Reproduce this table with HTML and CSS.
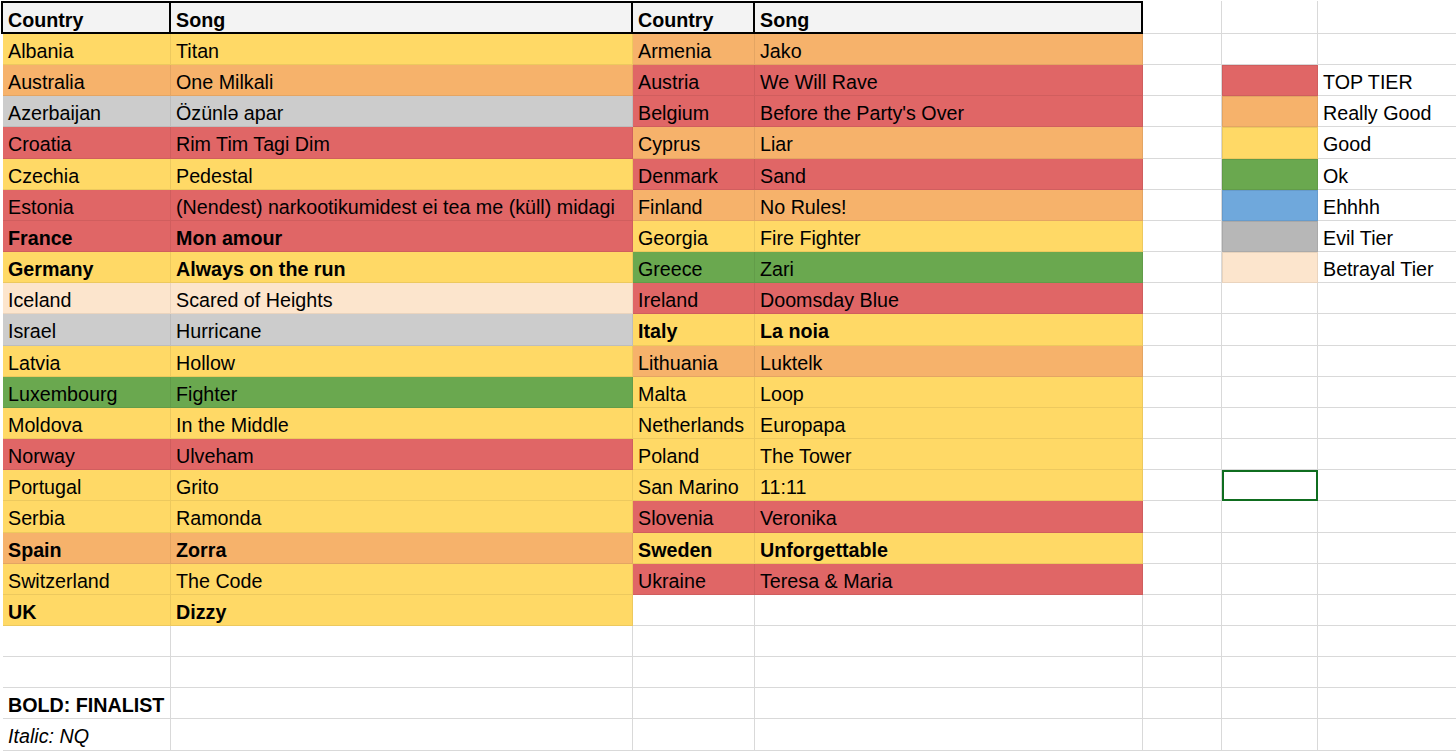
FILE: index.html
```html
<!DOCTYPE html>
<html lang="en">
<head>
<meta charset="utf-8">
<title>Eurovision 2024 tier list</title>
<link rel="stylesheet" href="styles.css">
</head>
<body>
<div class="sheet">
  <div class="row head">
    <div class="cell hc first">Country</div>
    <div class="cell hc">Song</div>
    <div class="cell hc">Country</div>
    <div class="cell hc">Song</div>
    <div class="cell"></div><div class="cell"></div><div class="cell"></div>
  </div>
  <div class="row">
    <div class="cell y">Albania</div><div class="cell y">Titan</div>
    <div class="cell o">Armenia</div><div class="cell o">Jako</div>
    <div class="cell"></div><div class="cell"></div><div class="cell"></div>
  </div>
  <div class="row">
    <div class="cell o">Australia</div><div class="cell o">One Milkali</div>
    <div class="cell r">Austria</div><div class="cell r">We Will Rave</div>
    <div class="cell"></div><div class="cell sw r"></div><div class="cell">TOP TIER</div>
  </div>
  <div class="row">
    <div class="cell gy">Azerbaijan</div><div class="cell gy">Özünlə apar</div>
    <div class="cell r">Belgium</div><div class="cell r">Before the Party's Over</div>
    <div class="cell"></div><div class="cell sw o"></div><div class="cell">Really Good</div>
  </div>
  <div class="row">
    <div class="cell r">Croatia</div><div class="cell r">Rim Tim Tagi Dim</div>
    <div class="cell o">Cyprus</div><div class="cell o">Liar</div>
    <div class="cell"></div><div class="cell sw y"></div><div class="cell">Good</div>
  </div>
  <div class="row">
    <div class="cell y">Czechia</div><div class="cell y">Pedestal</div>
    <div class="cell r">Denmark</div><div class="cell r">Sand</div>
    <div class="cell"></div><div class="cell sw g"></div><div class="cell">Ok</div>
  </div>
  <div class="row">
    <div class="cell r">Estonia</div><div class="cell r">(Nendest) narkootikumidest ei tea me (küll) midagi</div>
    <div class="cell o">Finland</div><div class="cell o">No Rules!</div>
    <div class="cell"></div><div class="cell sw b"></div><div class="cell">Ehhhh</div>
  </div>
  <div class="row">
    <div class="cell r bold">France</div><div class="cell r bold">Mon amour</div>
    <div class="cell y">Georgia</div><div class="cell y">Fire Fighter</div>
    <div class="cell"></div><div class="cell sw ev"></div><div class="cell">Evil Tier</div>
  </div>
  <div class="row">
    <div class="cell y bold">Germany</div><div class="cell y bold">Always on the run</div>
    <div class="cell g">Greece</div><div class="cell g">Zari</div>
    <div class="cell"></div><div class="cell sw bt"></div><div class="cell">Betrayal Tier</div>
  </div>
  <div class="row">
    <div class="cell bt">Iceland</div><div class="cell bt">Scared of Heights</div>
    <div class="cell r">Ireland</div><div class="cell r">Doomsday Blue</div>
    <div class="cell"></div><div class="cell"></div><div class="cell"></div>
  </div>
  <div class="row">
    <div class="cell gy">Israel</div><div class="cell gy">Hurricane</div>
    <div class="cell y bold">Italy</div><div class="cell y bold">La noia</div>
    <div class="cell"></div><div class="cell"></div><div class="cell"></div>
  </div>
  <div class="row">
    <div class="cell y">Latvia</div><div class="cell y">Hollow</div>
    <div class="cell o">Lithuania</div><div class="cell o">Luktelk</div>
    <div class="cell"></div><div class="cell"></div><div class="cell"></div>
  </div>
  <div class="row">
    <div class="cell g">Luxembourg</div><div class="cell g">Fighter</div>
    <div class="cell y">Malta</div><div class="cell y">Loop</div>
    <div class="cell"></div><div class="cell"></div><div class="cell"></div>
  </div>
  <div class="row">
    <div class="cell y">Moldova</div><div class="cell y">In the Middle</div>
    <div class="cell y">Netherlands</div><div class="cell y">Europapa</div>
    <div class="cell"></div><div class="cell"></div><div class="cell"></div>
  </div>
  <div class="row">
    <div class="cell r">Norway</div><div class="cell r">Ulveham</div>
    <div class="cell y">Poland</div><div class="cell y">The Tower</div>
    <div class="cell"></div><div class="cell"></div><div class="cell"></div>
  </div>
  <div class="row">
    <div class="cell y">Portugal</div><div class="cell y">Grito</div>
    <div class="cell y">San Marino</div><div class="cell y">11:11</div>
    <div class="cell"></div><div class="cell sel"></div><div class="cell"></div>
  </div>
  <div class="row">
    <div class="cell y">Serbia</div><div class="cell y">Ramonda</div>
    <div class="cell r">Slovenia</div><div class="cell r">Veronika</div>
    <div class="cell"></div><div class="cell"></div><div class="cell"></div>
  </div>
  <div class="row">
    <div class="cell o bold">Spain</div><div class="cell o bold">Zorra</div>
    <div class="cell y bold">Sweden</div><div class="cell y bold">Unforgettable</div>
    <div class="cell"></div><div class="cell"></div><div class="cell"></div>
  </div>
  <div class="row">
    <div class="cell y">Switzerland</div><div class="cell y">The Code</div>
    <div class="cell r">Ukraine</div><div class="cell r">Teresa &amp; Maria</div>
    <div class="cell"></div><div class="cell"></div><div class="cell"></div>
  </div>
  <div class="row">
    <div class="cell y bold">UK</div><div class="cell y bold">Dizzy</div>
    <div class="cell"></div><div class="cell"></div>
    <div class="cell"></div><div class="cell"></div><div class="cell"></div>
  </div>
  <div class="row">
    <div class="cell"></div><div class="cell"></div><div class="cell"></div><div class="cell"></div>
    <div class="cell"></div><div class="cell"></div><div class="cell"></div>
  </div>
  <div class="row">
    <div class="cell"></div><div class="cell"></div><div class="cell"></div><div class="cell"></div>
    <div class="cell"></div><div class="cell"></div><div class="cell"></div>
  </div>
  <div class="row">
    <div class="cell bold">BOLD: FINALIST</div><div class="cell"></div><div class="cell"></div><div class="cell"></div>
    <div class="cell"></div><div class="cell"></div><div class="cell"></div>
  </div>
  <div class="row">
    <div class="cell italic">Italic: NQ</div><div class="cell"></div><div class="cell"></div><div class="cell"></div>
    <div class="cell"></div><div class="cell"></div><div class="cell"></div>
  </div>
</div>
</body>
</html>
```
FILE: styles.css
```css
* { box-sizing: border-box; }

html, body {
  margin: 0;
  background: #ffffff;
  overflow: hidden;
}

body {
  font-family: "Liberation Sans", Arial, sans-serif;
  font-size: 19.7px;
  color: #000000;
}

.sheet {
  padding: 1px 0 0 1px;
}

.row {
  display: grid;
  grid-template-columns: 168px 462px 122px 388px 79px 96px 150px;
  height: 31.17px;
  padding-left: 2px;
}

.row.head {
  grid-template-columns: 170px 462px 122px 388px 79px 96px 150px;
  height: 33px;
  padding-left: 0;
}

.cell {
  border-right: 1px solid #d9d9d9;
  border-bottom: 1px solid #d9d9d9;
  padding: 7px 5px 0 5px;
  line-height: 20px;
  white-space: nowrap;
  overflow: hidden;
}

.head .cell {
  padding-top: 8px;
}

.head .hc {
  background: #f3f3f3;
  border-top: 2px solid #000000;
  border-bottom: 2px solid #000000;
  border-right: 2px solid #000000;
  font-weight: bold;
  padding-top: 7px;
}

.head .hc.first {
  border-left: 2px solid #000000;
}

.bold { font-weight: bold; }
.italic { font-style: italic; }

.y, .o, .r, .g, .b, .gy, .ev, .bt {
  border-right-color: rgba(0, 0, 0, 0.07);
  border-bottom-color: rgba(0, 0, 0, 0.07);
}

.y { background: #ffd966; }
.o { background: #f6b26b; }
.r { background: #e06666; }
.g { background: #6aa84f; }
.b { background: #6fa8dc; }
.gy { background: #cccccc; }
.ev { background: #b7b7b7; }
.bt { background: #fce5cd; }

.sw {
  box-shadow: inset 1px 1px 0 rgba(0, 0, 0, 0.08);
}

.sel {
  border-right-color: #0f6d1f;
  border-bottom-color: #0f6d1f;
  box-shadow: inset 2px 2px 0 #0f6d1f, inset -1px -1px 0 #0f6d1f;
}
```
